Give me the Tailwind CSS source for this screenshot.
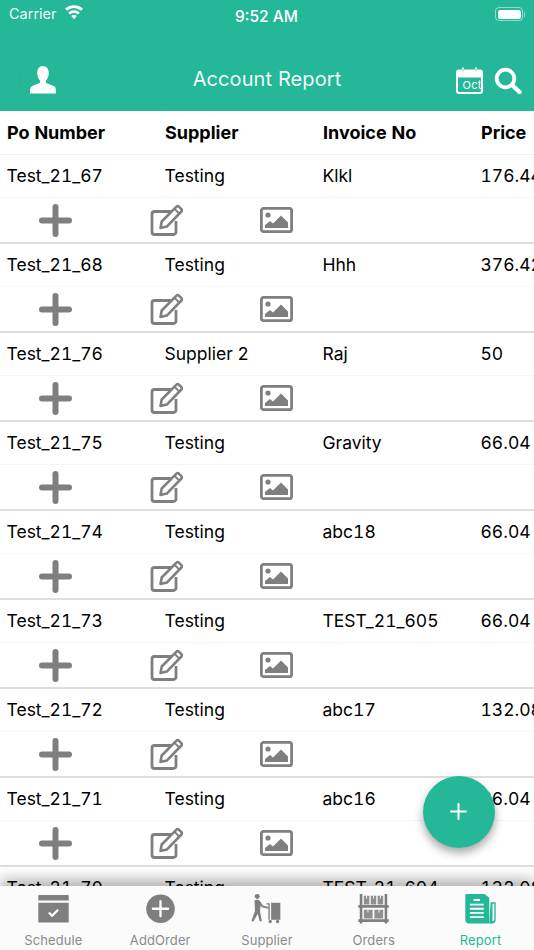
<!DOCTYPE html>
<html lang="en">
<head>
  <meta charset="UTF-8">
  <title>Account Report</title>
  <script src="https://cdn.jsdelivr.net/npm/@tailwindcss/browser@4"></script>
</head>
<body class="bg-white">
<svg class="hidden">
  <symbol id="i-plus" viewBox="0 0 33 33"><path d="M13.500 3a3 3 0 0 1 6 0v10.500H30a3 3 0 0 1 0 6H19.500V30a3 3 0 0 1-6 0V19.500H3a3 3 0 0 1 0-6h10.500z" fill="#7f7f7f"/></symbol>
  <symbol id="i-edit" viewBox="0 0 33 33"><path d="M22 7.500H4.500a2.500 2.500 0 0 0-2.500 2.500v18a2.500 2.500 0 0 0 2.500 2.500h19a2.500 2.500 0 0 0 2.500-2.500V17" fill="none" stroke="#7f7f7f" stroke-width="2.800"/><path d="M10.500 24l1.200-6.500L26.500 2.600a1.600 1.600 0 0 1 2.300 0l2.600 2.600a1.600 1.600 0 0 1 0 2.300L16.800 22.600z" fill="none" stroke="#7f7f7f" stroke-width="2.600" stroke-linejoin="round"/><path d="M24.500 4.800l4.800 4.800" stroke="#7f7f7f" stroke-width="2"/></symbol>
  <symbol id="i-image" viewBox="0 0 33 26"><rect x="1.400" y="1.400" width="30.200" height="23.200" rx="2.200" fill="none" stroke="#7f7f7f" stroke-width="2.800"/><circle cx="8" cy="8" r="2.600" fill="#7f7f7f"/><path d="M5 21v-3l5-4 3 2.500 8-8 7 7v5.500z" fill="#7f7f7f"/></symbol>
</svg>

<div class="relative w-[534px] h-[950px] overflow-hidden flex flex-col font-['Inter','Liberation_Sans',sans-serif]">
  <!-- Header -->
  <header class="h-[111px] shrink-0 bg-[#24b899] text-white flex flex-col">
    <div class="h-[28px] flex items-center justify-between pl-[9px] pr-[9px] relative">
      <div class="flex items-center gap-[7px] text-[14.500px] text-white/95">
        <span>Carrier</span>
        <svg width="20" height="15" viewBox="0 0 19 14" class="-mt-[3px]"><path d="M9.500 13.500l-2.600-3.200a4 4 0 0 1 5.200 0zM5.700 8.900L4 6.900a8.300 8.300 0 0 1 11 0l-1.700 2a5.800 5.800 0 0 0-7.600 0zM2.800 5.400L1 3.300a12.600 12.600 0 0 1 17 0l-1.800 2.100a10 10 0 0 0-13.400 0z" fill="#fff"/></svg>
      </div>
      <span class="absolute left-[235px] top-[5px] text-[15.500px] font-medium">9:52 AM</span>
      <div class="flex items-center">
        <div class="w-[28px] h-[14px] rounded-[4px] border border-white/50 p-[1.500px]"><div class="w-full h-full rounded-[2.500px] bg-white"></div></div>
        <div class="w-[1px] h-[5px] bg-white/50 ml-[1px]"></div>
      </div>
    </div>
    <div class="flex-1 relative flex items-center justify-center pt-[18px]">
      <span class="text-[20px] tracking-[0.1px] text-white/95">Account Report</span>
      <div class="absolute left-[19px] top-[29px] w-[46px] h-[46px] rounded-full border border-[#2bb196] flex items-center justify-center">
        <svg width="27" height="30" viewBox="0 0 28 29"><path d="M14 0c4.300 0 6.500 3 6.500 7.200 0 3-1 5.800-2.700 7.600-.6.700-.5 2.200.3 2.800 1.600 1.200 7 2.300 8.700 4 1 1 1.200 3.500 1.200 7H1c0-3.500.2-6 1.200-7 1.700-1.700 7.100-2.800 8.700-4 .8-.6.900-2.100.3-2.800C9.500 13 8.500 10.200 8.500 7.200 8.500 3 10.700 0 14 0z" fill="#fff"/></svg>
      </div>
      <svg class="absolute left-[456px] top-[39px]" width="27" height="27" viewBox="0 0 27 27"><rect x="1" y="3.500" width="25" height="22.500" rx="2" fill="none" stroke="#fff" stroke-width="2"/><path d="M1 4h25v6.500H1z" fill="#fff"/><path d="M7 .5v5M20 .5v5" stroke="#fff" stroke-width="2" /><path d="M7 1v3.500M20 1v3.500" stroke="#24b899" stroke-width="0.600"/><text x="6.500" y="22" font-size="11" fill="#fff" font-family="Inter, sans-serif" letter-spacing="0.300">Oct</text></svg>
      <svg class="absolute left-[494px] top-[39px]" width="28" height="27" viewBox="0 0 28 27"><circle cx="11.500" cy="11.500" r="8.800" fill="none" stroke="#fff" stroke-width="3.800"/><path d="M18 18l7.500 7" stroke="#fff" stroke-width="4.400" stroke-linecap="round"/></svg>
    </div>
  </header>

  <!-- Table -->
  <main class="flex-1 min-h-0 overflow-hidden text-black text-[17.500px] tabular-nums">
    <div class="h-[44px] grid grid-cols-[158px_158px_158px_158px] pl-[7px] items-center font-bold border-b border-[#f3f3f3] text-[18px]">
      <span>Po Number</span><span>Supplier</span><span>Invoice No</span><span>Price</span>
    </div>
    <div id="rows"></div>
  </main>

  <!-- Tab bar -->
  <nav class="h-[64px] shrink-0 bg-[#fbfbfb] relative flex text-[13px] tracking-[0.1px] text-[#8a8a8a] shadow-[0_-6px_14px_rgba(0,0,0,0.32)]">
    <div class="flex-1 flex flex-col items-center pt-[8px]">
      <svg width="33" height="32" viewBox="0 0 33 32"><path d="M0 2a1 1 0 0 1 1-1h31a1 1 0 0 1 1 1v5H0z" fill="#7f7f7f"/><path d="M0 9.500h33V30a1 1 0 0 1-1 1H1a1 1 0 0 1-1-1z" fill="#7f7f7f"/><path d="M11.500 20l3.500 3.500 6.500-6.500" fill="none" stroke="#fff" stroke-width="2.400"/></svg>
      <span class="mt-[7px]">Schedule</span>
    </div>
    <div class="flex-1 flex flex-col items-center pt-[8px]">
      <svg width="33" height="32" viewBox="0 0 33 33"><circle cx="16.500" cy="16.500" r="16" fill="#7f7f7f"/><path d="M16.500 8v17M8 16.500h17" stroke="#fff" stroke-width="2.600" stroke-linecap="round"/></svg>
      <span class="mt-[7px]">AddOrder</span>
    </div>
    <div class="flex-1 flex flex-col items-center pt-[8px]">
      <svg width="33" height="32" viewBox="0 0 33 32"><circle cx="6.500" cy="2.700" r="2.700" fill="#7f7f7f"/><path d="M3.500 7c1-1 4.500-1 5.500 0l3.500 5.500 6 1.500v2l-7-1.500-1.500-2-.5 6.500 2 10.500H9l-2-8-4.500 8H0l4-11z" fill="#7f7f7f"/><path d="M16.500 10h3.500v18h-1.500V11.500h-2z" fill="#7f7f7f"/><path d="M21.500 9.500h10v18.500h-10z" fill="#7f7f7f"/><circle cx="20.500" cy="29.800" r="1.800" fill="#7f7f7f"/><circle cx="28.500" cy="29.800" r="1.800" fill="#7f7f7f"/></svg>
      <span class="mt-[7px]">Supplier</span>
    </div>
    <div class="flex-1 flex flex-col items-center pt-[8px]">
      <svg width="33" height="32" viewBox="0 0 33 32"><path d="M3 0v32M30 0v32" stroke="#7f7f7f" stroke-width="2.800"/><path d="M0 13.500h33M0 29h33" stroke="#7f7f7f" stroke-width="3"/><path d="M6 2h6v9.500H6zM13.500 2h6v9.500h-6zM21 2h6v9.500h-6zM6 17h9.500v9.500H6zM17.500 17H27v9.500h-9.500z" fill="#8f8f8f"/><path d="M8.500 2h1v3h-1zM16 2h1v3h-1zM23.500 2h1v3h-1zM10 17h1v3h-1zM22 17h1v3h-1z" fill="#fff"/></svg>
      <span class="mt-[7px]">Orders</span>
    </div>
    <div class="flex-1 flex flex-col items-center pt-[8px] text-[#24b899]">
      <svg width="33" height="32" viewBox="0 0 33 32"><path d="M1 0h20l5 4v28H4a4 4 0 0 1-4-4V1a1 1 0 0 1 1-1z" fill="#24b899"/><path d="M27.500 9H33v19a4 4 0 0 1-4 4h-3z" fill="#24b899"/><path d="M29.500 10.500H31.500V27.500a2 2 0 0 1-2 2z" fill="#fbfbfb"/><path d="M9 6.500h7M5 11.500h15M5 16h15M5 20.500h15M5 25h15" stroke="#fff" stroke-width="2"/></svg>
      <span class="mt-[7px]">Report</span>
    </div>
  </nav>

  <!-- Floating add button -->
  <button class="absolute left-[423px] top-[776px] w-[72px] h-[72px] rounded-full bg-[#24b899] flex items-center justify-center shadow-[0_5px_10px_rgba(0,0,0,0.35)]">
    <svg width="17" height="17" viewBox="0 0 17 17" class="-ml-[2px] -mt-[1px]"><path d="M8.500 1v15M1 8.500h15" stroke="#fff" stroke-width="2" stroke-linecap="round"/></svg>
  </button>
</div>

<script>
  const data = [
    ['Test_21_67', 'Testing', 'Klkl', '176.44'],
    ['Test_21_68', 'Testing', 'Hhh', '376.42'],
    ['Test_21_76', 'Supplier 2', 'Raj', '50'],
    ['Test_21_75', 'Testing', 'Gravity', '66.04'],
    ['Test_21_74', 'Testing', 'abc18', '66.04'],
    ['Test_21_73', 'Testing', 'TEST_21_605', '66.04'],
    ['Test_21_72', 'Testing', 'abc17', '132.08'],
    ['Test_21_71', 'Testing', 'abc16', '66.04'],
    ['Test_21_70', 'Testing', 'TEST_21_604', '132.08']
  ];
  document.getElementById('rows').innerHTML = data.map(r => `
    <div class="h-[89px] border-b-2 border-[#dedede]">
      <div class="h-[43px] grid grid-cols-[158px_158px_158px_158px] pl-[6.500px] items-center border-b border-[#f5f5f5]">
        <span>${r[0]}</span><span>${r[1]}</span><span>${r[2]}</span><span class="whitespace-nowrap">${r[3]}</span>
      </div>
      <div class="h-[44px] flex items-center pl-[39px] gap-[77.500px]">
        <svg class="w-[33px] h-[33px]"><use href="#i-plus"/></svg>
        <svg class="w-[33px] h-[33px]"><use href="#i-edit"/></svg>
        <svg class="w-[33px] h-[26px]"><use href="#i-image"/></svg>
      </div>
    </div>`).join('');
</script>
</body>
</html>
